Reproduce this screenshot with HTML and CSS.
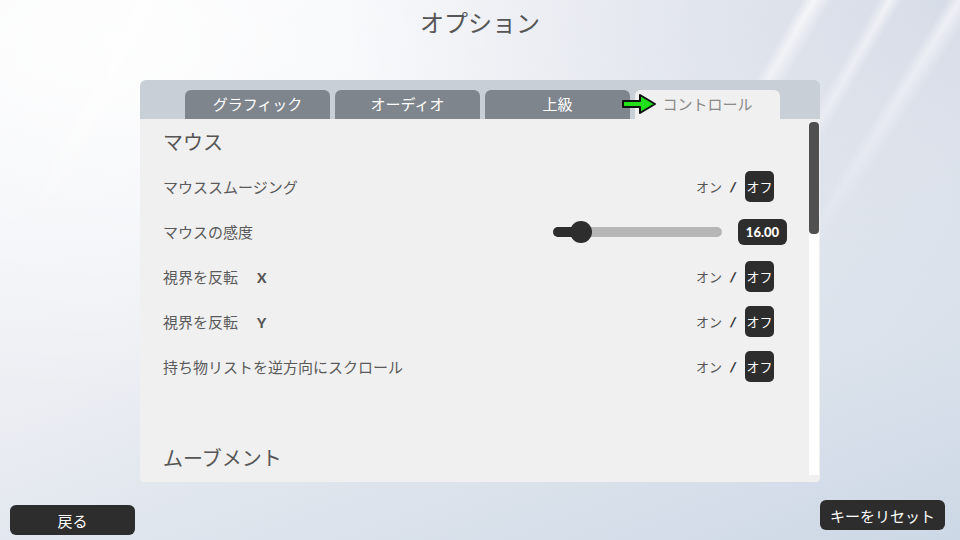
FILE: index.html
```html
<!DOCTYPE html>
<html lang="ja">
<head>
    <meta charset="UTF-8">
    <meta name="viewport" content="width=device-width, initial-scale=1.0">
    <title>オプション</title>
    <link rel="stylesheet" href="styles.css">
</head>
<body>

<div class="screen">
    <h1 class="title">オプション</h1>

    <div class="panel">
        <div class="tabs">
            <div class="tab">グラフィック</div>
            <div class="tab">オーディオ</div>
            <div class="tab">上級</div>
            <div class="tab active">
                <svg class="arrow" width="36" height="22" viewBox="0 0 36 22">
                    <path d="M2 8 H19 V2 L34 11 L19 20 V14 H2 Z" fill="#22e01c" stroke="#111" stroke-width="2" stroke-linejoin="round"/>
                </svg>
                コントロール
            </div>
        </div>

        <div class="content">
            <div class="list">
                <h2 class="section">マウス</h2>

                <div class="row">
                    <span class="label">マウススムージング</span>
                    <div class="toggle"><span class="on">オン</span><span class="slash">/</span><span class="off">オフ</span></div>
                </div>
                <div class="row">
                    <span class="label">マウスの感度</span>
                    <div class="slider">
                        <div class="track"><div class="fill" style="width: 28px"></div><div class="knob" style="left: 28px"></div></div>
                        <span class="value">16.00</span>
                    </div>
                </div>
                <div class="row">
                    <span class="label">視界を反転　<b class="axis">X</b></span>
                    <div class="toggle"><span class="on">オン</span><span class="slash">/</span><span class="off">オフ</span></div>
                </div>
                <div class="row">
                    <span class="label">視界を反転　<b class="axis">Y</b></span>
                    <div class="toggle"><span class="on">オン</span><span class="slash">/</span><span class="off">オフ</span></div>
                </div>
                <div class="row">
                    <span class="label">持ち物リストを逆方向にスクロール</span>
                    <div class="toggle"><span class="on">オン</span><span class="slash">/</span><span class="off">オフ</span></div>
                </div>

                <h2 class="section movement">ムーブメント</h2>
            </div>
            <div class="scrollbar"><div class="thumb"></div></div>
        </div>
    </div>

    <div class="footer">
        <button class="btn back">戻る</button>
        <button class="btn reset">キーをリセット</button>
    </div>
</div>

</body>
</html>
```

FILE: styles.css
```css
body {
    margin: 0;
    position: relative;
    font-family: "Noto Sans CJK JP", "Noto Sans", sans-serif;
    color: #555;
    background:
        radial-gradient(ellipse at 100% 0%, rgba(205,212,226,0.7), transparent 45%),
        radial-gradient(ellipse at 12% 8%, rgba(255,255,255,0.9), transparent 50%),
        linear-gradient(160deg, #f5f6f9 0%, #eceef3 45%, #dce3ec 72%, #cdd8e6 100%);
    width: 960px;
    height: 540px;
    overflow: hidden;
}

/* light streaks, fading out downwards */
body::before {
    content: "";
    position: absolute;
    inset: 0;
    background:
        linear-gradient(120deg, transparent 63%, rgba(255,255,255,0.7) 64%, transparent 65.5%),
        linear-gradient(120deg, transparent 69%, rgba(255,255,255,0.6) 70%, transparent 71%),
        linear-gradient(122deg, transparent 73%, rgba(255,255,255,0.6) 74%, transparent 75.5%),
        linear-gradient(118deg, transparent 9%, rgba(255,255,255,0.5) 12%, transparent 15%);
    -webkit-mask-image: linear-gradient(to bottom, #000 0%, transparent 50%);
    mask-image: linear-gradient(to bottom, #000 0%, transparent 50%);
    pointer-events: none;
}

.screen {
    position: relative;
    display: flex;
    flex-direction: column;
    height: 540px;
}

.title {
    margin: 0;
    height: 80px;
    padding-top: 6px;
    box-sizing: border-box;
    font-size: 24px;
    line-height: 32px;
    font-weight: 400;
    text-align: center;
    color: #555;
}

.panel {
    width: 680px;
    height: 402px;
    margin: 0 auto;
    display: flex;
    flex-direction: column;
    border-radius: 6px 6px 4px 4px;
    overflow: hidden;
}

.tabs {
    height: 39px;
    box-sizing: border-box;
    padding: 10px 0 0 45px;
    display: flex;
    gap: 5px;
    background: #c9cfd7;
}

.tab {
    position: relative;
    width: 145px;
    height: 29px;
    border-radius: 6px 6px 0 0;
    background: #7e858d;
    color: #fff;
    font-size: 15px;
    line-height: 27px;
    text-align: center;
}

.tab.active {
    background: #f0f0f0;
    color: #8a8a8a;
}

.arrow {
    position: absolute;
    left: -14px;
    top: 3px;
}

.content {
    flex: 1;
    display: flex;
    background: #f0f0f0;
    padding-right: 1px;
}

.list {
    flex: 1;
    padding: 9px 0 0 23px;
    overflow: hidden;
}

.section {
    margin: 0;
    font-size: 20px;
    line-height: 28px;
    font-weight: 400;
    color: #555;
}

.section.movement {
    margin-top: 55px;
}

.row {
    height: 45px;
    display: flex;
    align-items: center;
    justify-content: space-between;
    padding-right: 22px;
}

.row:first-of-type {
    margin-top: 8px;
}

.label {
    font-size: 15px;
    color: #5a5a5a;
}

.axis {
    font-family: "Lato", sans-serif;
    font-weight: 900;
    font-size: 14px;
    color: #555;
    margin-left: 4px;
}

.toggle {
    display: flex;
    align-items: center;
    margin-right: 13px;
}

.on {
    font-size: 13px;
    color: #555;
}

.slash {
    font-family: "Lato", sans-serif;
    font-weight: 900;
    font-style: italic;
    font-size: 14px;
    color: #333;
    margin: 0 9px 0 8px;
}

.off {
    width: 29px;
    height: 31px;
    border-radius: 5px;
    background: #2d2d2d;
    color: #fff;
    font-size: 13px;
    line-height: 31px;
    text-align: center;
}

.slider {
    display: flex;
    align-items: center;
    gap: 16px;
}

.track {
    position: relative;
    width: 169px;
    height: 10px;
    border-radius: 5px;
    background: #b6b6b6;
}

.fill {
    height: 10px;
    border-radius: 5px 0 0 5px;
    background: #2d2d2d;
}

.knob {
    position: absolute;
    top: -6px;
    width: 22px;
    height: 22px;
    margin-left: -11px;
    border-radius: 50%;
    background: #2d2d2d;
}

.value {
    width: 49px;
    height: 26px;
    border-radius: 6px;
    background: #2d2d2d;
    color: #fff;
    font-family: "Lato", sans-serif;
    font-weight: 900;
    font-size: 13px;
    line-height: 26px;
    text-align: center;
}

.scrollbar {
    width: 10px;
    margin: 3px 0 7px;
    background: #fff;
}

.thumb {
    height: 112px;
    border-radius: 4px;
    background: #505050;
}

.footer {
    display: flex;
    justify-content: space-between;
    align-items: flex-start;
    padding: 18px 15px 0 10px;
}

.btn {
    width: 125px;
    height: 30px;
    border: none;
    border-radius: 6px;
    background: #2d2d2d;
    color: #fff;
    font-family: "Noto Sans CJK JP", sans-serif;
    font-size: 15px;
    padding: 0;
}

.back {
    margin-top: 5px;
}
```
